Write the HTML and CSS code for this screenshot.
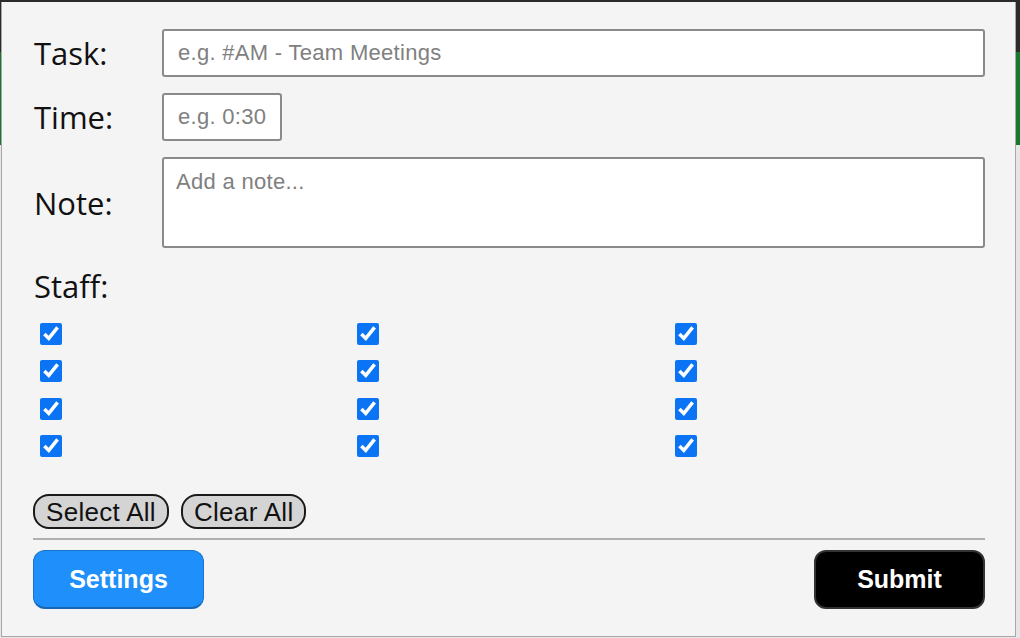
FILE: index.html
```html
<!DOCTYPE html>
<html>
<head>
<meta charset="utf-8">
<link rel="stylesheet" href="styles.css">
</head>
<body>
<div class="backdrop">
  <div class="panel">
    <div class="fields">
      <label class="label" for="task">Task:</label>
      <input id="task" class="field" type="text" placeholder="e.g. #AM - Team Meetings">
      <label class="label" for="time">Time:</label>
      <input id="time" class="field time" type="text" placeholder="e.g. 0:30">
      <label class="label" for="note">Note:</label>
      <textarea id="note" class="field note" placeholder="Add a note..."></textarea>
    </div>
    <div class="label staff-label">Staff:</div>
    <div class="staff">
      <label class="staff-item"><input type="checkbox" checked></label>
      <label class="staff-item"><input type="checkbox" checked></label>
      <label class="staff-item"><input type="checkbox" checked></label>
      <label class="staff-item"><input type="checkbox" checked></label>
      <label class="staff-item"><input type="checkbox" checked></label>
      <label class="staff-item"><input type="checkbox" checked></label>
      <label class="staff-item"><input type="checkbox" checked></label>
      <label class="staff-item"><input type="checkbox" checked></label>
      <label class="staff-item"><input type="checkbox" checked></label>
      <label class="staff-item"><input type="checkbox" checked></label>
      <label class="staff-item"><input type="checkbox" checked></label>
      <label class="staff-item"><input type="checkbox" checked></label>
    </div>
    <div class="select-row">
      <button class="pill">Select All</button>
      <button class="pill">Clear All</button>
    </div>
    <div class="divider"></div>
    <div class="actions">
      <button class="btn settings">Settings</button>
      <button class="btn submit">Submit</button>
    </div>
  </div>
</div>
</body>
</html>
```
FILE: styles.css
```css
html, body {
  margin: 0;
  padding: 0;
}
body {
  width: 1020px;
  height: 638px;
  overflow: hidden;
}
.backdrop {
  width: 1020px;
  height: 638px;
  box-sizing: border-box;
  padding: 2px 4px 1px 1px;
  background: linear-gradient(to bottom, #2b2b2b 0, #2b2b2b 52px, #17772f 52px, #17772f 145px, #e6e6e6 145px, #e6e6e6 100%);
}
.panel {
  box-sizing: border-box;
  height: 635px;
  background: #f4f4f4;
  border: 1px solid #a8a8a8;
  border-top: none;
  padding: 27px 30px 0 31px;
  display: flex;
  flex-direction: column;
}
.fields {
  display: grid;
  grid-template-columns: 129px 1fr;
  row-gap: 16px;
  align-items: center;
}
.label {
  font-family: "Open Sans", "Noto Sans", sans-serif;
  font-size: 31px;
  line-height: 40px;
  color: #111;
  padding-left: 1px;
}
.field {
  box-sizing: border-box;
  height: 48px;
  border: 2px solid #8a8a8a;
  border-radius: 3px;
  background: #fff;
  font-family: "Liberation Sans", Arial, sans-serif;
  font-size: 22px;
  letter-spacing: 0.3px;
  padding: 0 14px;
  margin: 0;
  outline: none;
}
.field::placeholder {
  color: #808080;
}
.time {
  width: 120px;
}
.note {
  height: 91px;
  padding: 10px 12px;
  resize: none;
}
.staff-label {
  margin-top: 18px;
}
.staff {
  margin-top: 9px;
  display: grid;
  grid-template-columns: repeat(3, 1fr);
  grid-auto-flow: column;
  grid-template-rows: repeat(4, 37.5px);
}
.staff-item {
  display: flex;
  align-items: center;
  padding-left: 7px;
}
.staff-item input {
  width: 22px;
  height: 22px;
  margin: 0;
  accent-color: #0a74f5;
}
.select-row {
  margin-top: 29px;
  display: flex;
  gap: 12px;
}
.pill {
  box-sizing: border-box;
  height: 35px;
  padding: 0 11px;
  border: 2px solid #1a1a1a;
  border-radius: 16px;
  background: #d4d4d4;
  color: #111;
  font-family: "Liberation Sans", Arial, sans-serif;
  font-size: 26px;
  letter-spacing: 0.3px;
  line-height: 28px;
}
.divider {
  margin-top: 9px;
  height: 2px;
  background: #b0b0b0;
}
.actions {
  margin-top: 10px;
  display: flex;
  justify-content: space-between;
}
.btn {
  box-sizing: border-box;
  width: 171px;
  height: 59px;
  border-radius: 12px;
  font-family: "Liberation Sans", Arial, sans-serif;
  font-weight: bold;
  font-size: 25px;
  color: #fff;
}
.settings {
  background: #1e8ffb;
  border: 1px solid #1a74c9;
  border-bottom: 2px solid #1767b4;
}
.submit {
  background: #000;
  border: 2px solid #333;
}
```
